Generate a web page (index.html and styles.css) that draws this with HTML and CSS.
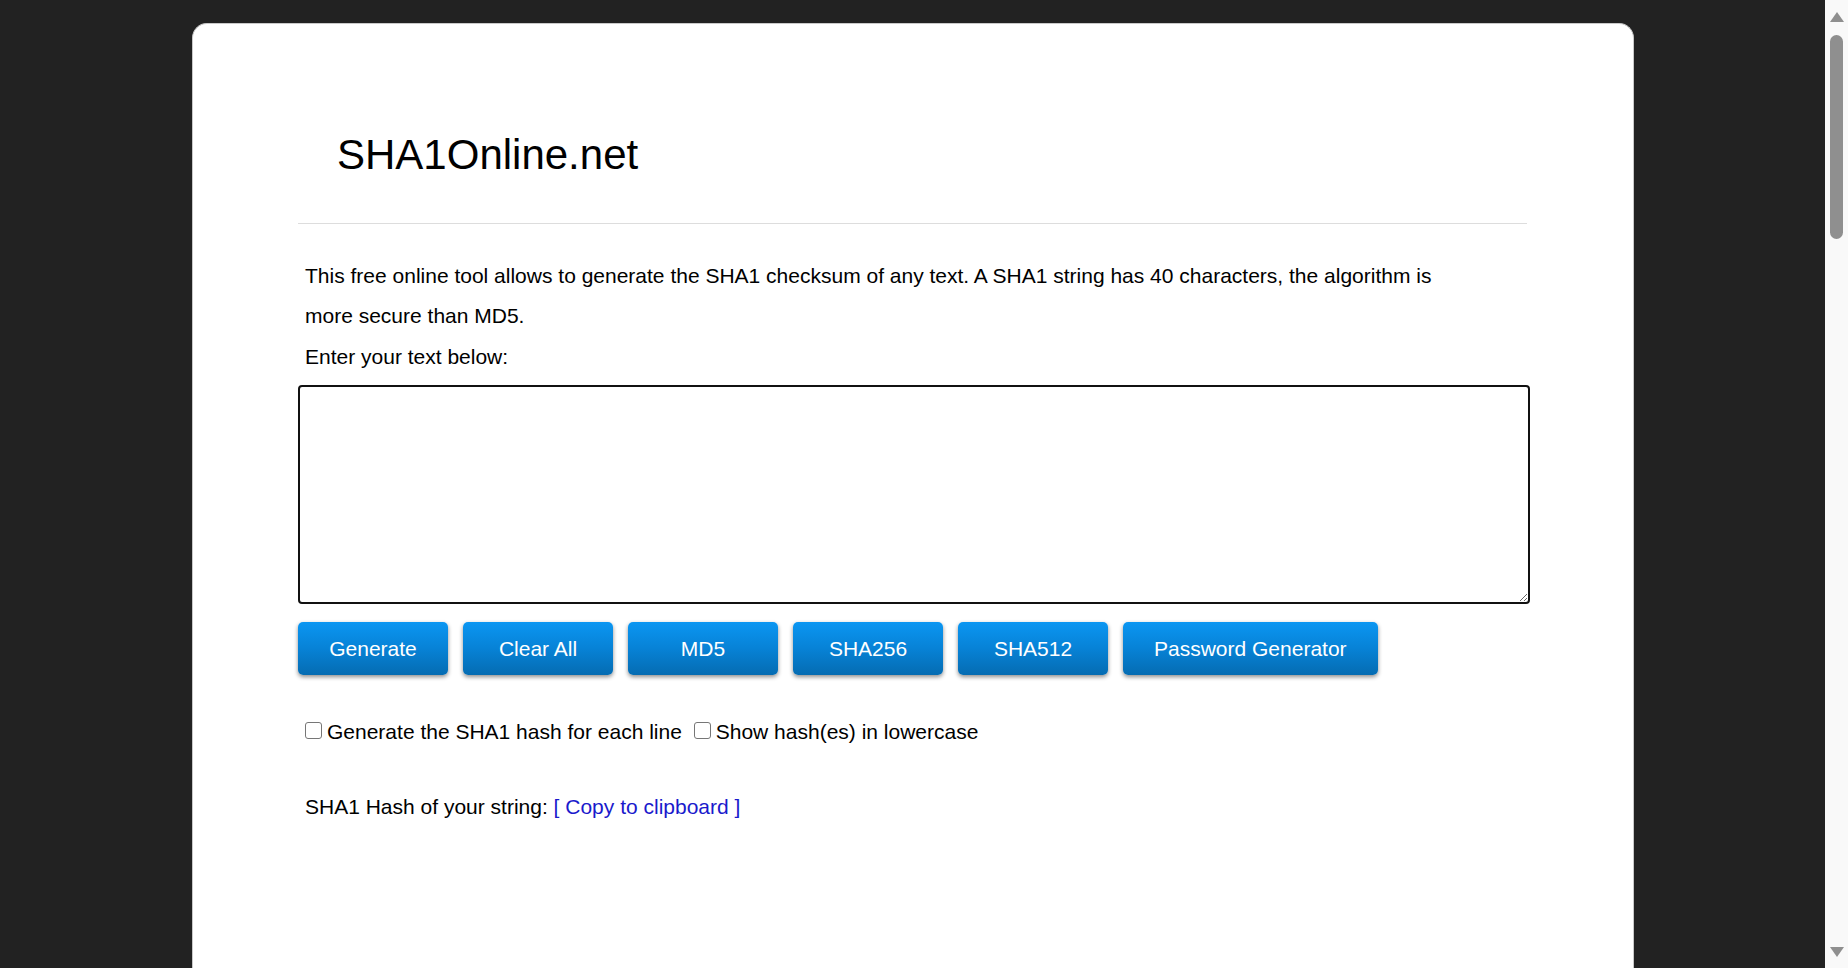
FILE: index.html
```html
<!DOCTYPE html>
<html lang="en">
<head>
<meta charset="utf-8">
<title>SHA1Online.net</title>
<link rel="stylesheet" href="styles.css">
</head>
<body>
  <div class="viewport">
    <main class="card">
      <header class="masthead">
        <h1 class="site-title">SHA1Online.net</h1>
      </header>
      <section class="tool">
        <p class="intro">This free online tool allows to generate the SHA1 checksum of any text. A SHA1 string has 40 characters, the algorithm is more secure than MD5.</p>
        <p class="prompt">Enter your text below:</p>
        <textarea class="input" autofocus></textarea>
        <div class="actions">
          <button class="btn" type="button">Generate</button>
          <button class="btn" type="button">Clear All</button>
          <button class="btn" type="button">MD5</button>
          <button class="btn" type="button">SHA256</button>
          <button class="btn" type="button">SHA512</button>
          <button class="btn" type="button">Password Generator</button>
        </div>
        <div class="options">
          <label class="option"><input class="check" type="checkbox">Generate the SHA1 hash for each line</label>
          <label class="option option-second"><input class="check" type="checkbox">Show hash(es) in lowercase</label>
        </div>
        <p class="result">SHA1 Hash of your string: <a class="copy-link" href="#">[ Copy to clipboard ]</a></p>
      </section>
    </main>
  </div>
  <div class="scrollbar">
    <span class="arrow arrow-up"></span>
    <span class="thumb"></span>
    <span class="track-fill"></span>
    <span class="arrow arrow-down"></span>
  </div>
</body>
</html>
```

FILE: styles.css
```css
html, body {
  margin: 0;
  padding: 0;
  height: 968px;
  overflow: hidden;
}

body {
  display: flex;
  background: #222222;
  font-family: "Liberation Sans", Arial, sans-serif;
  color: #000;
}

.viewport {
  flex: 1;
  padding: 23px 0 0 192px;
  overflow: hidden;
}

.card {
  box-sizing: border-box;
  width: 1442px;
  min-height: 1100px;
  background: #fff;
  border: 1px solid #c9c9c9;
  border-bottom: 0;
  border-radius: 15px 15px 0 0;
  padding: 0 103px 0 105px;
}

.masthead {
  margin: 0 3px 0 0;
  padding: 107px 0 44px;
  border-bottom: 1px solid #dddddd;
}

.site-title {
  margin: 0;
  padding-left: 39px;
  font-size: 42px;
  line-height: 48px;
  font-weight: normal;
}

.tool {
  font-size: 21px;
  line-height: 40px;
}

.intro {
  margin: 32px 0 0;
  padding: 0 78px 0 7px;
}

.prompt {
  margin: 1px 0 0;
  padding: 0 7px;
}

.input {
  display: block;
  box-sizing: border-box;
  width: 1232px;
  height: 219px;
  margin: 8px 0 0;
  padding: 6px 6px;
  border: 2px solid #111;
  border-radius: 4px;
  font-family: "Liberation Sans", Arial, sans-serif;
  font-size: 16px;
  line-height: 20px;
  outline: none;
}

.input:focus {
  outline: none;
}

.actions {
  display: flex;
  gap: 15px;
  margin-top: 18px;
  padding-left: 0;
}

.btn {
  min-width: 150px;
  height: 53px;
  padding: 0 31px;
  border: 0;
  border-radius: 5px;
  background: linear-gradient(to bottom, #0b96f2 0%, #0782d6 50%, #056cb2 100%);
  box-shadow: 0 2px 4px rgba(0, 0, 0, 0.45);
  color: #fff;
  font-family: "Liberation Sans", Arial, sans-serif;
  font-size: 21px;
  line-height: 53px;
}

.options {
  margin-top: 37px;
  padding-left: 7px;
}

.option-second {
  margin-left: 6px;
}

.check {
  -webkit-appearance: none;
  appearance: none;
  box-sizing: border-box;
  width: 17px;
  height: 17px;
  margin: 0 5px 0 0;
  border: 1px solid #767676;
  border-radius: 3px;
  background: #fff;
  vertical-align: 0;
}

.result {
  margin: 35px 0 0;
  padding: 0 7px;
}

.copy-link {
  color: #1a1acc;
  text-decoration: none;
}

.scrollbar {
  width: 23px;
  flex: none;
  display: flex;
  flex-direction: column;
  align-items: center;
  background: #f9f9f9;
}

.arrow {
  width: 0;
  height: 0;
  border-left: 7px solid transparent;
  border-right: 7px solid transparent;
}

.arrow-up {
  margin-top: 12px;
  border-bottom: 10px solid #8f8f8f;
}

.thumb {
  width: 13px;
  height: 204px;
  margin-top: 13px;
  border-radius: 7px;
  background: #8f8f8f;
}

.track-fill {
  flex: 1;
}

.arrow-down {
  margin-bottom: 11px;
  border-top: 10px solid #8f8f8f;
}
```
